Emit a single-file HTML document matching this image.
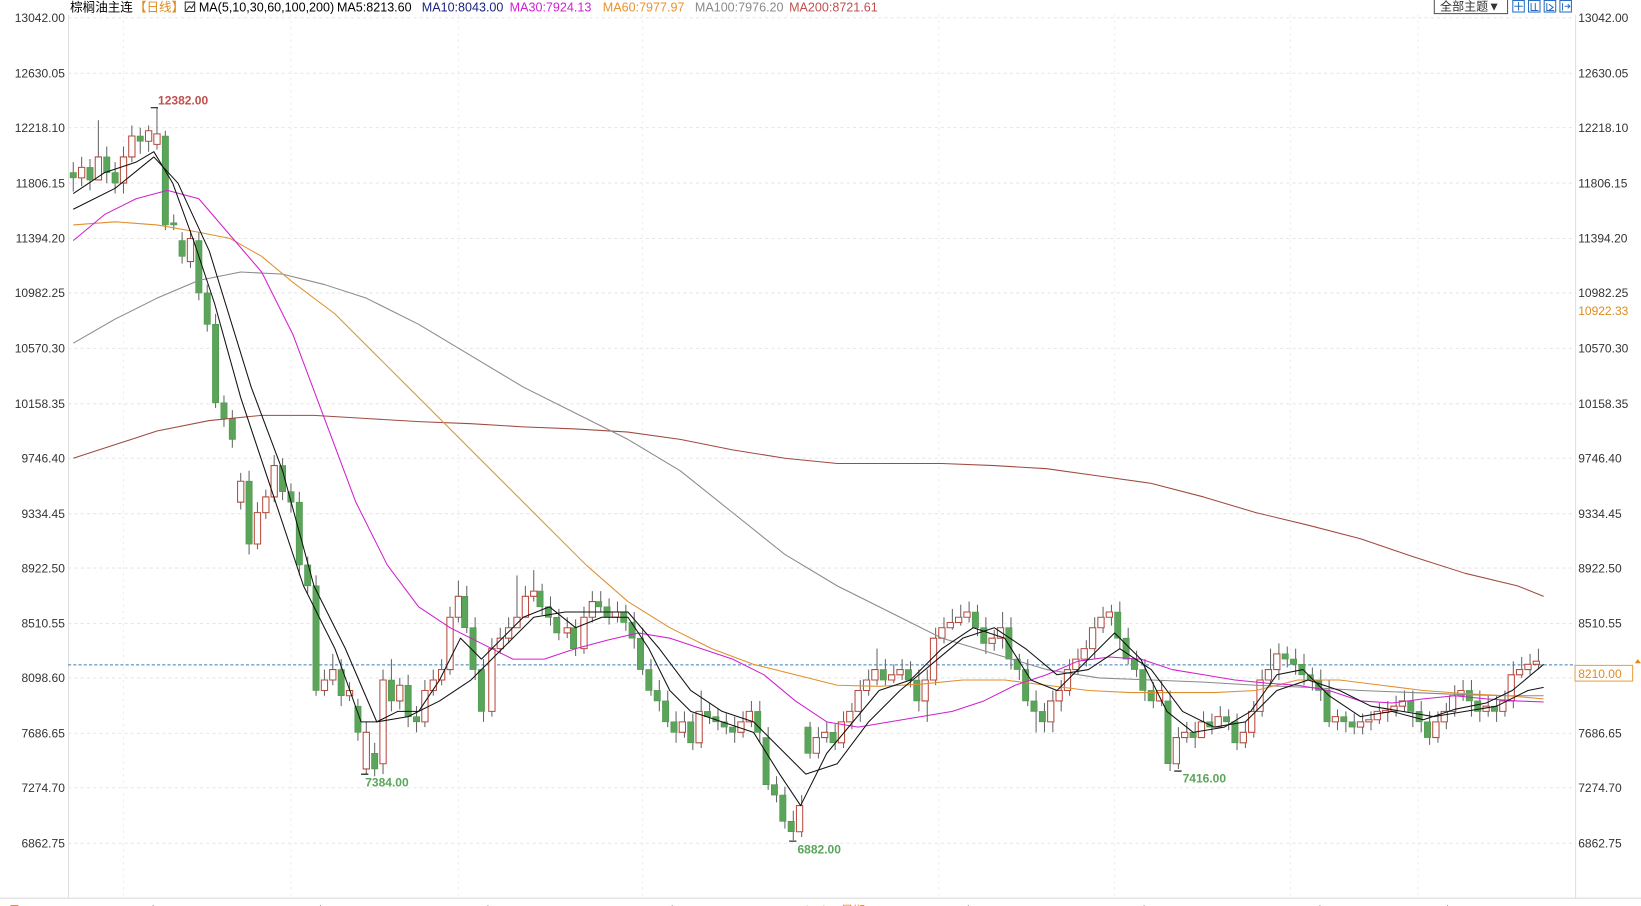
<!DOCTYPE html>
<html><head><meta charset="utf-8">
<style>
html,body{margin:0;padding:0;background:#fff;width:1641px;height:906px;overflow:hidden}
svg{display:block}
text{font-family:"Liberation Sans","Noto Sans CJK SC",sans-serif}
</style></head><body>
<svg width="1641" height="906" viewBox="0 0 1568 866" preserveAspectRatio="none" xmlns="http://www.w3.org/2000/svg">
<rect width="1568" height="866" fill="#fff"/>
<g stroke="#e6e6e6" stroke-width="1" stroke-dasharray="3,3">
<path d="M65 17H1505M65 70H1505M65 122H1505M65 175H1505M65 228H1505M65 280H1505M65 333H1505M65 386H1505M65 438H1505M65 491H1505M65 543H1505M65 596H1505M65 648H1505M65 701H1505M65 753H1505M65 806H1505"/>
<path d="M118 14V858M278 14V858M438 14V858M614 14V858M897 14V858M1065 14V858M1233 14V858M1355 14V858" stroke="#ececec" stroke-dasharray="2,4"/>
</g>
<path d="M65.5 14V858M1505.5 14V858" stroke="#e0e0e0"/>
<path d="M0 858.5H1568" stroke="#d8d8d8"/>
<g font-size="11.5" fill="#333">
<g text-anchor="end">
<text x="62" y="21">13042.00</text><text x="62" y="74">12630.05</text><text x="62" y="126">12218.10</text><text x="62" y="179">11806.15</text><text x="62" y="232">11394.20</text><text x="62" y="284">10982.25</text><text x="62" y="337">10570.30</text><text x="62" y="390">10158.35</text><text x="62" y="442">9746.40</text><text x="62" y="495">9334.45</text><text x="62" y="547">8922.50</text><text x="62" y="600">8510.55</text><text x="62" y="652">8098.60</text><text x="62" y="705">7686.65</text><text x="62" y="757">7274.70</text><text x="62" y="810">6862.75</text>
</g>
<text x="1508" y="21">13042.00</text><text x="1508" y="74">12630.05</text><text x="1508" y="126">12218.10</text><text x="1508" y="179">11806.15</text><text x="1508" y="232">11394.20</text><text x="1508" y="284">10982.25</text><text x="1508" y="337">10570.30</text><text x="1508" y="390">10158.35</text><text x="1508" y="442">9746.40</text><text x="1508" y="495">9334.45</text><text x="1508" y="547">8922.50</text><text x="1508" y="600">8510.55</text><text x="1508" y="705">7686.65</text><text x="1508" y="757">7274.70</text><text x="1508" y="810">6862.75</text>
<text x="1508" y="301" fill="#e08a1e">10922.33</text>
</g>
<rect x="1505" y="636" width="55" height="15" fill="#fff" stroke="#e8a040"/>
<text x="1508" y="648" font-size="11.5" fill="#e08a1e">8210.00</text>
<path d="M1562 634l3-4 3 4z" fill="#e08a1e"/>
<g font-size="11.5" fill="#333">
<text x="118" y="874">2022/06</text><text x="278" y="874">2022/07</text><text x="438" y="874">2022/08</text><text x="614" y="874">2022/09</text><text x="743" y="874" fill="#e08a1e">2022/09/27 星期二</text><text x="897" y="874">2022/11</text><text x="1065" y="874">2022/12</text><text x="1233" y="874">2023/01</text><text x="1355" y="874">2023/02</text>
<text x="8" y="874" fill="#e08a1e">日K</text>
</g>
<path d="M65 635.5H1505" stroke="#3a7fb8" stroke-dasharray="3,2" stroke-width="1"/>
<g stroke="#666" stroke-width="1" fill="none">
<path d="M70 155v28M78 150v28M86 152v30M94 115v55M102 140v35M110 155v30M118 140v45M126 120v35M134 122v25M142 120v25M150 103v40M158 125v95M166 205v15M174 222v30M182 220v36M190 222v65M198 272v45M206 300v90M214 378v30M222 392v36M230 452v35M238 450v80M246 480v45M254 468v28M262 435v45M270 438v40M278 462v28M286 470v80M294 532v35M302 550v115M310 640v25M318 625v30M326 630v45M334 652v18M342 668v40M350 690v50M358 710v32M366 640v100M374 630v50M382 648v30M390 645v50M398 675v25M406 650v45M414 640v25M422 630v25M430 580v65M438 555v40M446 560v45M454 590v60M462 630v60M470 610v75M478 600v25M486 590v25M494 550v50M502 560v25M510 545v30M518 558v30M526 570v28M534 582v30M542 590v20M550 592v35M558 580v45M566 565v30M574 565v20M582 572v25M590 575v20M598 578v25M606 585v35M614 600v45M622 630v35M630 650v30M638 660v35M646 680v30M654 680v25M662 682v35M670 660v55M678 672v20M686 678v20M694 682v20M702 685v25M710 680v25M718 670v25M726 670v40M734 695v60M742 742v25M750 752v40M758 775v28M766 760v40M774 690v35M782 695v30M790 690v20M798 692v25M806 680v35M814 672v25M822 650v40M830 640v25M838 620v35M846 630v25M854 635v18M862 630v20M870 632v25M878 640v40M886 640v50M894 600v55M902 590v25M910 582v20M918 578v20M926 575v20M934 578v30M942 590v35M950 602v20M958 585v35M966 590v50M974 625v25M982 630v45M990 660v40M998 672v28M1006 660v40M1014 650v30M1022 630v35M1030 620v25M1038 612v25M1046 590v40M1054 580v25M1062 578v20M1070 575v45M1078 600v35M1086 622v25M1094 630v40M1102 652v25M1110 650v25M1118 660v77M1126 695v40M1134 690v20M1142 690v25M1150 680v20M1158 682v20M1166 675v20M1174 678v20M1182 682v35M1190 690v25M1198 670v35M1206 640v45M1214 620v35M1222 615v35M1230 618v20M1238 620v25M1246 625v30M1254 638v22M1262 640v30M1270 650v45M1278 678v20M1286 680v20M1294 682v20M1302 682v20M1310 680v18M1318 672v20M1326 670v20M1334 665v20M1342 660v20M1350 660v35M1358 670v30M1366 680v32M1374 680v30M1382 672v25M1390 655v30M1398 650v20M1406 650v35M1414 660v30M1422 665v20M1430 665v25M1438 660v25M1446 632v45M1454 628v20M1462 625v20M1470 620v20"/>
</g>
<path fill="#5ba55b" stroke="#4e964e" stroke-width="0.6" d="M67 165h6v5h-6zM83 160h6v12h-6zM99 150h6v15h-6zM107 165h6v10h-6zM131 130h6v5h-6zM155 130h6v85h-6zM163 213h6v2h-6zM171 230h6v15h-6zM187 230h6v50h-6zM195 280h6v30h-6zM203 310h6v75h-6zM211 385h6v15h-6zM219 400h6v20h-6zM235 460h6v60h-6zM267 445h6v25h-6zM275 470h6v10h-6zM283 480h6v60h-6zM291 540h6v20h-6zM299 560h6v100h-6zM323 640h6v25h-6zM339 675h6v25h-6zM355 720h6v15h-6zM371 650h6v20h-6zM387 655h6v30h-6zM395 685h6v5h-6zM441 570h6v30h-6zM449 600h6v40h-6zM457 640h6v40h-6zM513 565h6v15h-6zM521 580h6v10h-6zM529 590h6v15h-6zM545 600h6v20h-6zM569 575h6v5h-6zM577 580h6v10h-6zM593 585h6v10h-6zM601 595h6v15h-6zM609 610h6v30h-6zM617 640h6v20h-6zM625 660h6v10h-6zM633 670h6v20h-6zM641 690h6v10h-6zM657 690h6v20h-6zM673 680h6v5h-6zM681 685h6v5h-6zM689 690h6v5h-6zM697 695h6v5h-6zM721 680h6v20h-6zM729 705h6v45h-6zM737 750h6v10h-6zM745 760h6v25h-6zM753 785h6v10h-6zM769 695h6v25h-6zM793 700h6v10h-6zM841 640h6v10h-6zM865 640h6v10h-6zM873 650h6v20h-6zM929 585h6v15h-6zM937 600h6v15h-6zM961 600h6v30h-6zM969 630h6v10h-6zM977 640h6v30h-6zM985 670h6v10h-6zM993 680h6v10h-6zM1065 585h6v25h-6zM1073 610h6v20h-6zM1081 630h6v10h-6zM1089 640h6v20h-6zM1097 660h6v10h-6zM1113 670h6v60h-6zM1137 700h6v5h-6zM1153 690h6v5h-6zM1169 685h6v5h-6zM1177 690h6v20h-6zM1225 625h6v5h-6zM1233 630h6v5h-6zM1241 635h6v10h-6zM1249 645h6v5h-6zM1257 650h6v10h-6zM1265 660h6v30h-6zM1281 685h6v5h-6zM1289 690h6v5h-6zM1345 670h6v10h-6zM1353 680h6v10h-6zM1361 690h6v15h-6zM1401 660h6v10h-6zM1409 670h6v10h-6zM1425 675h6v5h-6z"/>
<path fill="#fff" stroke="#b84a3e" stroke-width="1" d="M75 160h6v10h-6zM91 150h6v22h-6zM115 150h6v25h-6zM123 130h6v20h-6zM139 125h6v10h-6zM147 128h6v10h-6zM179 228h6v22h-6zM227 460h6v20h-6zM243 490h6v30h-6zM251 475h6v15h-6zM259 445h6v30h-6zM307 650h6v10h-6zM315 640h6v10h-6zM331 660h6v5h-6zM347 700h6v35h-6zM363 650h6v80h-6zM379 655h6v15h-6zM403 660h6v30h-6zM411 650h6v10h-6zM419 640h6v10h-6zM427 590h6v50h-6zM435 570h6v20h-6zM467 620h6v60h-6zM475 610h6v10h-6zM483 600h6v10h-6zM491 590h6v10h-6zM499 570h6v20h-6zM507 565h6v5h-6zM539 600h6v5h-6zM555 590h6v30h-6zM563 575h6v15h-6zM585 585h6v5h-6zM649 690h6v10h-6zM665 680h6v30h-6zM705 690h6v10h-6zM713 680h6v10h-6zM761 770h6v25h-6zM777 705h6v15h-6zM785 700h6v5h-6zM801 690h6v20h-6zM809 680h6v10h-6zM817 660h6v20h-6zM825 650h6v10h-6zM833 640h6v10h-6zM849 645h6v5h-6zM857 640h6v5h-6zM881 650h6v20h-6zM889 610h6v40h-6zM897 600h6v10h-6zM905 595h6v5h-6zM913 590h6v5h-6zM921 585h6v5h-6zM945 610h6v5h-6zM953 600h6v10h-6zM1001 670h6v20h-6zM1009 660h6v10h-6zM1017 640h6v20h-6zM1025 630h6v10h-6zM1033 620h6v10h-6zM1041 600h6v20h-6zM1049 590h6v10h-6zM1057 585h6v5h-6zM1105 660h6v10h-6zM1121 705h6v25h-6zM1129 700h6v5h-6zM1145 690h6v15h-6zM1161 685h6v10h-6zM1185 700h6v10h-6zM1193 680h6v20h-6zM1201 650h6v30h-6zM1209 640h6v10h-6zM1217 625h6v15h-6zM1273 685h6v5h-6zM1297 690h6v5h-6zM1305 688h6v2h-6zM1313 680h6v8h-6zM1321 679h6v2h-6zM1329 675h6v5h-6zM1337 670h6v5h-6zM1369 690h6v15h-6zM1377 680h6v10h-6zM1385 665h6v15h-6zM1393 660h6v5h-6zM1417 675h6v5h-6zM1433 670h6v10h-6zM1441 645h6v25h-6zM1449 640h6v5h-6zM1457 635h6v5h-6zM1465 632h6v3h-6z"/>
<g fill="none" stroke-width="1" stroke-linejoin="round">
<polyline stroke="#a04a40" points="70,438 110,425 150,412 200,402 250,397 300,397 350,400 400,403 450,405 500,408 550,410 600,413 650,420 700,430 750,438 800,443 850,443 900,443 950,445 1000,448 1050,455 1100,462 1150,475 1200,490 1250,502 1300,515 1350,532 1400,548 1450,560 1475,570"/>
<polyline stroke="#8a8a8a" points="70,328 110,305 150,285 190,268 230,260 270,262 310,272 350,285 400,310 450,340 500,370 550,395 600,420 650,450 700,490 750,530 800,560 850,585 900,610 950,625 1000,640 1050,648 1100,650 1150,652 1200,655 1250,657 1300,660 1350,662 1400,664 1440,665 1475,665"/>
<polyline stroke="#e09030" points="70,215 110,212 150,215 190,222 220,228 250,245 280,270 320,300 360,340 400,380 440,420 480,460 520,500 560,540 600,575 640,600 680,620 720,635 760,645 800,655 840,656 880,654 920,650 960,650 1000,655 1040,660 1080,662 1120,662 1160,662 1200,660 1240,650 1280,650 1320,655 1360,660 1400,663 1440,665 1475,668"/>
<polyline stroke="#d020d0" points="70,230 100,205 130,190 160,182 190,190 220,225 250,260 280,320 310,400 340,480 370,540 400,580 430,600 460,615 490,630 520,630 550,620 580,612 610,605 640,610 670,620 700,630 730,645 760,670 790,690 820,695 850,690 880,685 910,680 940,670 970,655 1000,645 1030,632 1060,628 1090,630 1120,640 1150,645 1180,650 1210,653 1240,655 1270,660 1300,670 1330,672 1360,668 1390,665 1420,668 1450,670 1475,671"/>
<polyline stroke="#111" points="70,200 110,180 147,150 170,175 200,240 240,370 270,450 300,560 330,620 360,690 390,685 420,670 450,650 480,620 510,590 540,585 570,585 600,585 630,620 660,660 690,680 720,690 750,720 770,740 800,730 830,690 860,660 890,635 920,610 950,600 980,620 1010,645 1040,640 1070,620 1100,640 1130,680 1160,695 1190,690 1220,660 1250,650 1280,660 1310,675 1340,680 1370,685 1400,680 1430,675 1460,660 1475,657"/>
<polyline stroke="#111" points="70,185 100,165 130,155 147,145 165,175 185,230 205,290 230,380 260,470 290,560 320,620 345,690 360,690 380,680 400,680 420,650 440,610 460,630 480,610 500,590 525,580 550,600 575,590 600,590 620,620 640,660 660,680 690,690 720,700 745,740 765,770 790,720 815,690 840,660 870,650 900,620 930,600 960,610 985,650 1010,660 1040,630 1065,605 1090,630 1115,680 1140,700 1170,695 1195,680 1220,645 1245,640 1270,665 1300,685 1330,680 1360,688 1390,678 1420,672 1445,660 1475,635"/>
</g>
<g font-size="11.5" font-weight="bold">
<path d="M144 103h7M345 740h7M754 804h7M1122 737h7" stroke="#000"/>
<text x="151" y="100" fill="#c0504d">12382.00</text>
<text x="349" y="752" fill="#5ba55b">7384.00</text>
<text x="762" y="816" fill="#5ba55b">6882.00</text>
<text x="1130" y="748" fill="#5ba55b">7416.00</text>
</g>
<g font-size="12">
<text x="67" y="11" fill="#000">棕榈油主连</text>
<text x="128" y="11" fill="#e08a1e">【日线】</text>
<rect x="177" y="2" width="9" height="9" fill="none" stroke="#333"/>
<path d="M178 10l3-4 2 2 3-5" stroke="#333" fill="none"/>
<text x="190" y="11" fill="#000">MA(5,10,30,60,100,200)</text>
<text x="322" y="11" fill="#000">MA5:8213.60</text>
<text x="403" y="11" fill="#1a237e">MA10:8043.00</text>
<text x="487" y="11" fill="#d020d0">MA30:7924.13</text>
<text x="576" y="11" fill="#e8922e">MA60:7977.97</text>
<text x="664" y="11" fill="#8a8a8a">MA100:7976.20</text>
<text x="754" y="11" fill="#c0504d">MA200:8721.61</text>
</g>
<rect x="1370.5" y="-1" width="70" height="14" fill="#fff" stroke="#555"/>
<text x="1376" y="10" font-size="11.5" fill="#333">全部主题▼</text>
<g fill="none" stroke="#2a6fc0">
<rect x="1445.5" y="0.5" width="11" height="11"/><rect x="1460.5" y="0.5" width="11" height="11"/><rect x="1475.5" y="0.5" width="11" height="11"/><rect x="1490.5" y="0.5" width="11" height="11"/>
<path d="M1451 2v8M1447 6h8M1463 3v7h7M1467 3v7M1478 3v7h7M1480 4l4 3-4 3M1493 3v7M1495 6h5M1498 4l2 2-2 2"/>
</g>
</svg>
</body></html>
